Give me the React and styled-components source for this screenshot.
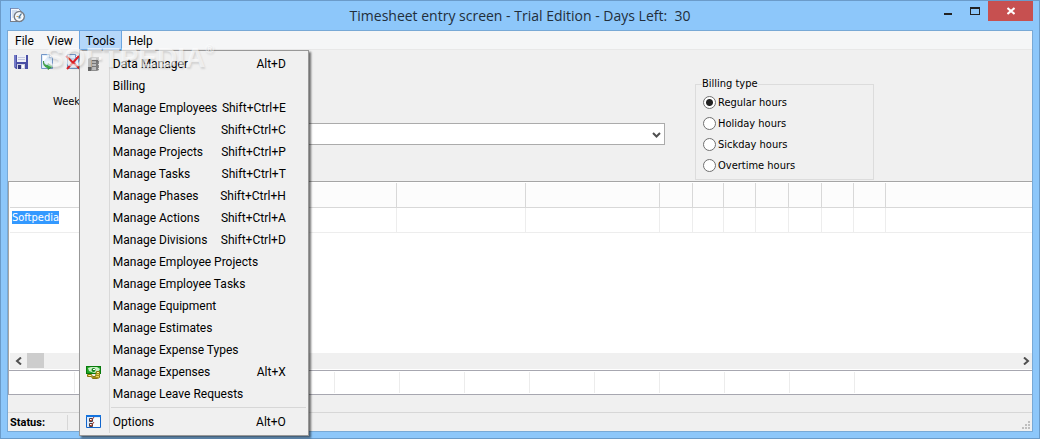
import React, { useState } from "react";
import styled, { createGlobalStyle, css } from "styled-components";

const ui = `"Open Sans", "Noto Sans", sans-serif`;
const menu = `Roboto, "Open Sans", sans-serif`;
const small = `"DejaVu Sans Condensed", "Noto Sans", sans-serif`;

const GlobalStyle = createGlobalStyle`
  *, *::before, *::after { box-sizing: border-box; }
  body { margin: 0; background: #8dc7fa; color: #000; font: 12px/16px ${menu}; }
  button, input, select { font: inherit; color: inherit; }
`;

const Window = styled.div`
  display: flex;
  flex-direction: column;
  min-height: 100vh;
  background: #8dc7fa;
  border: 1px solid #6b9bc9;
`;

const TitleBar = styled.header`
  display: grid;
  grid-template-columns: 140px 1fr 140px;
  height: 29px;
  padding: 0 6px;
`;

const AppIcon = styled.span`
  display: flex;
  padding: 6px 2px;
`;

const Title = styled.h1`
  margin: 0;
  font-family: ${ui};
  font-size: 14px;
  font-weight: 400;
  line-height: 30px;
  text-align: center;
  white-space: pre;
  color: #222e3a;
`;

const Controls = styled.div`
  display: flex;
  justify-content: flex-end;
  align-items: flex-start;
`;

const ControlButton = styled.button`
  display: flex;
  align-items: center;
  justify-content: center;
  width: ${(p) => (p.$close ? 45 : 27)}px;
  height: 20px;
  padding: 0;
  border: 0;
  background: ${(p) => (p.$close ? "#c75050" : "transparent")};
`;

const Client = styled.div`
  flex: 1;
  display: flex;
  flex-direction: column;
  margin: 0 6px 6px;
  background: #f0f0f0;
  border: 1px solid #78a9d6;
`;

const MenuBar = styled.nav`
  display: flex;
  height: 19px;
  background: #f5f6f7;
  border-bottom: 1px solid #e8e8e8;
`;

const MenuSlot = styled.div`
  position: relative;
  & + & { margin-left: -1px; }
`;

const MenuTitle = styled.button`
  display: block;
  height: 20px;
  margin-top: -1px;
  padding: 0 6px;
  border: 1px solid transparent;
  background: transparent;
  line-height: 20px;
  ${(p) =>
    p.$open &&
    css`
      background: #b5d7fa;
      border-color: #6ba5e0;
    `}
`;

const Popup = styled.ul`
  position: absolute;
  z-index: 2;
  top: 19px;
  left: 0;
  width: 230px;
  margin: 0;
  padding: 2px;
  list-style: none;
  border: 1px solid #989898;
  background: linear-gradient(#d9d9d9, #d9d9d9) 29px 2px / 1px calc(100% - 4px) no-repeat #f0f0f0;
  box-shadow: 2px 2px 2px rgba(0, 0, 0, 0.55);
`;

const Entry = styled.button`
  display: grid;
  grid-template-columns: 31px 1fr auto;
  align-items: center;
  width: 100%;
  height: 22px;
  padding: 0 20px 0 0;
  border: 0;
  background: transparent;
  text-align: left;
  white-space: nowrap;
`;

const EntryIcon = styled.span`
  display: flex;
  padding-left: 4px;
`;

const Divider = styled.li`
  height: 6px;
  padding: 2px 0 0 29px;
  &::before {
    content: "";
    display: block;
    border-top: 1px solid #d7d7d7;
  }
`;

const Toolbar = styled.div`
  display: flex;
  gap: 10px;
  height: 24px;
  padding: 4px 5px;
`;

const ToolButton = styled.button`
  display: flex;
  width: 16px;
  height: 16px;
  padding: 0;
  border: 0;
  background: transparent;
`;

const EntryForm = styled.form`
  display: flex;
  gap: 30px;
  height: 107px;
  padding-top: 3px;
  font: 11px/14px ${small};
`;

const Fields = styled.div`
  display: flex;
  flex-direction: column;
  gap: 10px;
  width: 657px;
  padding-top: 14px;
`;

const Field = styled.label`
  display: flex;
  align-items: center;
  height: 22px;
  padding-left: ${(p) => p.$indent}px;
`;

const FieldInput = styled.input`
  width: 100px;
  height: 20px;
  margin-left: 20px;
  border: 1px solid #ababab;
`;

const SelectBox = styled.span`
  position: relative;
  flex: 1;
  margin-left: 20px;
  svg {
    position: absolute;
    right: 4px;
    top: 9px;
    pointer-events: none;
  }
`;

const Select = styled.select`
  display: block;
  width: 100%;
  height: 22px;
  appearance: none;
  background: #fff;
  border: 1px solid #ababab;
  border-radius: 0;
`;

const Group = styled.fieldset`
  width: 179px;
  height: 103px;
  margin: 0;
  padding: 1px 0 0 7px;
  border: 1px solid #dcdcdc;
`;

const Legend = styled.legend`
  margin-left: -1px;
  padding: 0;
`;

const Option = styled.label`
  display: flex;
  align-items: center;
  gap: 2px;
  height: 21px;
`;

const Radio = styled.input`
  appearance: none;
  width: 13px;
  height: 13px;
  margin: 0;
  border: 1px solid #707070;
  border-radius: 50%;
  background: #fff;
  &:checked {
    background: radial-gradient(circle, #222 0 3px, #fff 4px);
  }
`;

const GridPane = styled.section`
  flex: 1;
  display: flex;
  flex-direction: column;
  min-height: 189px;
  padding: 1px 0 1px 1px;
  background: #fff;
  border-top: 1px solid #a5a5a5;
  border-left: 1px solid #a5a5a5;
`;

const GridScroll = styled.div`
  flex: 1;
`;

const Table = styled.table`
  width: 100%;
  table-layout: fixed;
  border-collapse: separate;
  border-spacing: 0;
  font: 11px/13px ${small};
  th, td {
    height: 25px;
    padding: 3px 2px;
    text-align: left;
    vertical-align: top;
    border: 0 solid #ededed;
    border-width: 0 1px 1px 0;
  }
  th {
    background: #fcfcfc;
    border-color: #d8d8d8;
  }
  th:last-child, td:last-child { border-right: 0; }
`;

const Selected = styled.mark`
  display: inline-block;
  background: #3399ff;
  color: #fff;
`;

const ScrollBar = styled.div`
  display: flex;
  height: 16px;
  background: #f0f0f0;
`;

const ScrollArrow = styled.button`
  display: flex;
  align-items: center;
  justify-content: center;
  width: ${(p) => (p.$right ? 11 : 17)}px;
  padding: 0;
  border: 0;
  background: transparent;
`;

const Track = styled.div`
  flex: 1;
`;

const Thumb = styled.div`
  width: 17px;
  height: 15px;
  background: #cdcdcd;
`;

const Totals = styled.div`
  display: flex;
  height: 25px;
  padding: 1px 0 1px 1px;
  background: #fff;
  border: solid #a7a7b0;
  border-width: 1px 0 1px 1px;
`;

const Total = styled.div`
  width: 65px;
  border-right: 1px solid #ececec;
`;

const StatusBar = styled.footer`
  display: flex;
  justify-content: space-between;
  align-items: stretch;
  height: 19px;
  margin-top: 17px;
  border-top: 1px solid #d7d7d7;
  font: bold 11px/18px ${menu};
`;

const StatusCell = styled.span`
  width: 60px;
  margin: 2px 0 1px;
  padding-left: 2px;
  line-height: 15px;
  border-right: 1px solid #d7d7d7;
`;

const Grip = styled.span`
  display: flex;
  align-items: flex-end;
  padding: 0 2px 2px 0;
`;

const Watermark = styled.div`
  position: absolute;
  z-index: 3;
  top: 47px;
  left: 45px;
  display: flex;
  align-items: flex-start;
  font: bold 28px/22px "Liberation Sans", sans-serif;
  color: rgba(255, 255, 255, 0.6);
  text-shadow: 1px 2px 2px rgba(0, 0, 0, 0.12);
  pointer-events: none;
  sup {
    margin-top: -4px;
    font-size: 12px;
    line-height: 12px;
  }
`;

const Svg = ({ w = 16, h = 16, children }) => (
  <svg width={w} height={h} viewBox={`0 0 ${w} ${h}`} aria-hidden="true">
    {children}
  </svg>
);

const TimesheetIcon = () => (
  <Svg>
    <path d="M1.5 1.5h8l3 3v10h-11z" fill="#f4f8fd" stroke="#8192b5" />
    <path d="M1 1h1v14H1z" fill="#5b7fc0" />
    <path d="M3 4h5M3 6h3M3 8h2M3 10h2" stroke="#b4c8e4" />
    <path d="M1 14.5h10" stroke="#777d87" />
    <circle cx="10.3" cy="9.5" r="5" fill="#e9f1f8" stroke="#777d86" strokeWidth="1.4" />
    <circle cx="10.3" cy="9.5" r="3.6" fill="none" stroke="#fff" />
    <path d="M10 10l2.5-3.5" stroke="#38688f" strokeWidth="1.2" />
    <path d="M7.5 9.5h2" stroke="#d5a052" />
    <path d="M9.5 9.5h2v2h-2z" fill="#547d9c" />
  </Svg>
);

const SaveIcon = () => (
  <Svg>
    <path d="M1 1h14v14H3l-2-2z" fill="#4a4fa5" />
    <path d="M1 1h2v12H1z" fill="#7279c6" />
    <path d="M4 1h9v7H4z" fill="#eef0f8" />
    <path d="M5 3.5h7M5 5.5h7" stroke="#c3c7df" />
    <path d="M4 10h8v5H4z" fill="#d0d3e3" />
    <path d="M5 11h3v4H5z" fill="#33377e" />
    <path d="M9 11h2v3H9z" fill="#fff" />
  </Svg>
);

const SheetIcon = ({ children }) => (
  <Svg>
    <path d="M2.5.5h8l3 3v11h-11z" fill="#e2effc" stroke="#7597c7" />
    <path d="M10.5.5v3h3" fill="#fff" stroke="#7597c7" />
    {children}
  </Svg>
);

const ExportIcon = () => (
  <SheetIcon>
    <path d="M4 2h5L4 8z" fill="#fff" />
    <path d="M4.500 7c0 3 1.500 4.500 4.500 4.500V9.500l4.500 3-4.500 3V13.500C6 13.500 4 11 4.500 7z" fill="#43b649" stroke="#26852e" strokeWidth=".7" />
  </SheetIcon>
);

const DeleteIcon = () => (
  <SheetIcon>
    <path d="M5 5h6M5 8h6M5 11h6" stroke="#9db9df" />
    <path d="M1 2l14 13M14 2L2 15" stroke="#dc1f26" strokeWidth="2" />
  </SheetIcon>
);

const CabinetIcon = () => (
  <Svg>
    <path d="M2 3l3-2h8v13l-2 1H2z" fill="#8e8e8e" />
    <path d="M2 3l3-1v13H2z" fill="#686868" />
    <path d="M6 2h4v12H6z" fill="#bdbdbd" />
    <path d="M6 4.500h4M6 7.500h4M6 10.500h4" stroke="#7b7b7b" />
    <path d="M11 2v12" stroke="#6c6c6c" />
    <path d="M12 4.500h1M12 8.500h1M12 12.500h1" stroke="#ddd" />
  </Svg>
);

const MoneyIcon = () => (
  <Svg>
    <path d="M0 2h15v8H0z" fill="#087a0b" />
    <path d="M1 3h13v6H1z" fill="#20a526" />
    <path d="M2 4l3-1h6l3 2-2 3-4 1-5-2z" fill="#c8efc4" />
    <circle cx="7.500" cy="6" r="2" fill="#14841a" />
    <path d="M7 5h2v1H7z" fill="#fff" />
    <path d="M1.500 10.500h4l1 2h3l1-5h3v6l-2 1h-5l-1-2h-4z" fill="#e9d755" stroke="#86740f" />
    <path d="M10 9.500h4M10 11.500h4M6 13.500h6" stroke="#a38e18" />
    <path d="M11 8h2v1h-2zM3 11h2v1H3z" fill="#fff7a0" />
  </Svg>
);

const OptionsIcon = () => (
  <Svg>
    <path d="M.5 1.500h14v12H.5z" fill="#dcebfc" stroke="#1165cc" />
    <path d="M0 1h15v2H0z" fill="#1473df" />
    <path d="M8 4h6v9H6z" fill="#f7fbff" />
    <path d="M3.500 4.500h3v3h-3zM3.500 9.500h3v3h-3z" fill="#fff" stroke="#4c3e40" />
    <path d="M4 6l1 1 3-4M4 11l1 1 3-4" fill="none" stroke="#ad3825" />
  </Svg>
);

const Chevron = () => (
  <Svg w={9} h={7}>
    <path d="M1 1l3.500 3.500L8 1" fill="none" stroke="#505050" strokeWidth="2" />
  </Svg>
);

const ScrollGlyph = ({ right }) => (
  <Svg w={7} h={8}>
    <path d={right ? "M1 .5L5 4 1 7.500" : "M6 .5L2 4l4 3.500"} fill="none" stroke="#505050" strokeWidth="2" />
  </Svg>
);

const toolsMenu = [
  { label: "Data Manager", keys: "Alt+D", icon: <CabinetIcon /> },
  { label: "Billing" },
  { label: "Manage Employees", keys: "Shift+Ctrl+E" },
  { label: "Manage Clients", keys: "Shift+Ctrl+C" },
  { label: "Manage Projects", keys: "Shift+Ctrl+P" },
  { label: "Manage Tasks", keys: "Shift+Ctrl+T" },
  { label: "Manage Phases", keys: "Shift+Ctrl+H" },
  { label: "Manage Actions", keys: "Shift+Ctrl+A" },
  { label: "Manage Divisions", keys: "Shift+Ctrl+D" },
  { label: "Manage Employee Projects" },
  { label: "Manage Employee Tasks" },
  { label: "Manage Equipment" },
  { label: "Manage Estimates" },
  { label: "Manage Expense Types" },
  { label: "Manage Expenses", keys: "Alt+X", icon: <MoneyIcon /> },
  { label: "Manage Leave Requests" },
  null,
  { label: "Options", keys: "Alt+O", icon: <OptionsIcon /> },
];

const columns = [130, 128, 129, 129, 134, 33, 31, 32, 33, 33, 32, 32, null];
const billingTypes = ["Regular hours", "Holiday hours", "Sickday hours", "Overtime hours"];

export default function App() {
  const [billing, setBilling] = useState(billingTypes[0]);

  return (
    <Window>
      <GlobalStyle />
      <TitleBar>
        <AppIcon><TimesheetIcon /></AppIcon>
        <Title>{"Timesheet entry screen - Trial Edition - Days Left:  30"}</Title>
        <Controls>
          <ControlButton aria-label="Minimize">
            <Svg w={8} h={10}><path d="M0 7h8v2H0z" fill="#222" /></Svg>
          </ControlButton>
          <ControlButton aria-label="Maximize">
            <Svg w={10} h={8}><path d="M0 0h10v8H0zM1 2v5h8V2z" fill="#222" fillRule="evenodd" /></Svg>
          </ControlButton>
          <ControlButton $close aria-label="Close">
            <Svg w={8} h={8}><path d="M.5 1l7 6M7.500 1l-7 6" stroke="#fff" strokeWidth="2" /></Svg>
          </ControlButton>
        </Controls>
      </TitleBar>

      <Client>
        <MenuBar>
          {["File", "View", "Tools", "Help"].map((name) => (
            <MenuSlot key={name}>
              <MenuTitle $open={name === "Tools"} aria-haspopup="menu">{name}</MenuTitle>
              {name === "Tools" && (
                <Popup>
                  {toolsMenu.map((item, i) =>
                    item ? (
                      <li key={item.label}>
                        <Entry>
                          <EntryIcon>{item.icon}</EntryIcon>
                          <span>{item.label}</span>
                          <span>{item.keys}</span>
                        </Entry>
                      </li>
                    ) : (
                      <Divider key={i} />
                    )
                  )}
                </Popup>
              )}
            </MenuSlot>
          ))}
        </MenuBar>

        <Toolbar>
          <ToolButton aria-label="Save"><SaveIcon /></ToolButton>
          <ToolButton aria-label="Export"><ExportIcon /></ToolButton>
          <ToolButton aria-label="Delete"><DeleteIcon /></ToolButton>
        </Toolbar>

        <EntryForm>
          <Fields>
            <Field $indent={45}>Week<FieldInput /></Field>
            <Field $indent={110}>
              <SelectBox>
                <Select aria-label="Employee"><option></option></Select>
                <Chevron />
              </SelectBox>
            </Field>
          </Fields>
          <Group>
            <Legend>Billing type</Legend>
            {billingTypes.map((type) => (
              <Option key={type}>
                <Radio type="radio" name="billing" checked={billing === type} onChange={() => setBilling(type)} />
                {type}
              </Option>
            ))}
          </Group>
        </EntryForm>

        <GridPane>
          <GridScroll>
            <Table>
              <colgroup>
                {columns.map((w, i) => <col key={i} width={w ?? undefined} />)}
              </colgroup>
              <thead>
                <tr>{columns.map((_, i) => <th key={i} scope="col" />)}</tr>
              </thead>
              <tbody>
                <tr>
                  {columns.map((_, i) => <td key={i}>{i === 0 && <Selected>Softpedia</Selected>}</td>)}
                </tr>
              </tbody>
            </Table>
          </GridScroll>
          <ScrollBar>
            <ScrollArrow aria-label="Scroll left"><ScrollGlyph /></ScrollArrow>
            <Track><Thumb /></Track>
            <ScrollArrow $right aria-label="Scroll right"><ScrollGlyph right /></ScrollArrow>
          </ScrollBar>
        </GridPane>

        <Totals>
          {Array.from({ length: 13 }, (_, i) => <Total key={i} />)}
        </Totals>

        <StatusBar>
          <StatusCell>Status:</StatusCell>
          <Grip>
            <Svg w={8} h={8}>
              <path d="M0 6h2v2H0zM3 6h2v2H3zM6 6h2v2H6zM3 3h2v2H3zM6 3h2v2H6zM6 0h2v2H6z" fill="#bfbfbf" />
            </Svg>
          </Grip>
        </StatusBar>
      </Client>
      <Watermark aria-hidden="true">SOFTPEDIA<sup>®</sup></Watermark>
    </Window>
  );
}
